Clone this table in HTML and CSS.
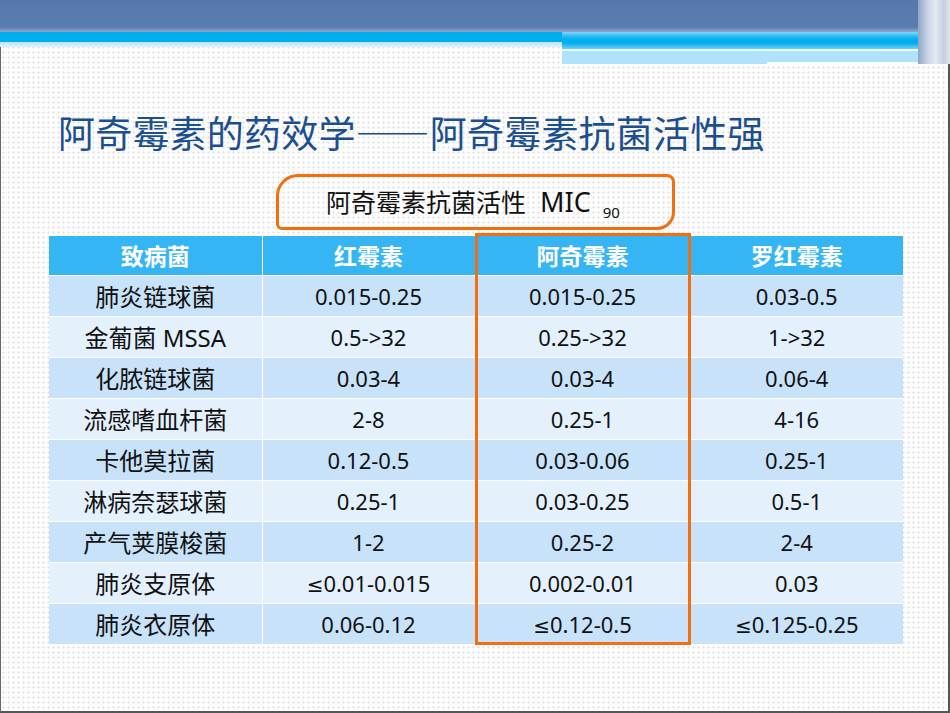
FILE: index.html
```html
<!DOCTYPE html>
<html lang="zh-CN">
<head>
<meta charset="utf-8">
<title>阿奇霉素的药效学</title>
<link rel="stylesheet" href="styles.css">
</head>
<body>
<div class="slide">
  <header class="topbar">
    <div class="bar-main">
      <div class="bar-dark"></div>
      <div class="bar-row">
        <div class="bar-left">
          <div class="bar-cyan"></div>
          <div class="bar-light"></div>
        </div>
        <div class="bar-right">
          <div class="br-cyan"></div>
          <div class="br-line"></div>
          <div class="br-pale"><div class="br-white"></div></div>
        </div>
      </div>
    </div>
    <div class="bar-edge"></div>
  </header>

  <h1 class="title">阿奇霉素的药效学——阿奇霉素抗菌活性强</h1>

  <div class="subtitle">阿奇霉素抗菌活性<span class="latin">MIC</span><sub>90</sub></div>

  <div class="table-wrap">
    <table class="mic">
      <thead>
        <tr><th>致病菌</th><th>红霉素</th><th>阿奇霉素</th><th>罗红霉素</th></tr>
      </thead>
      <tbody>
        <tr><td>肺炎链球菌</td><td>0.015-0.25</td><td>0.015-0.25</td><td>0.03-0.5</td></tr>
        <tr><td>金葡菌 MSSA</td><td>0.5-&gt;32</td><td>0.25-&gt;32</td><td>1-&gt;32</td></tr>
        <tr><td>化脓链球菌</td><td>0.03-4</td><td>0.03-4</td><td>0.06-4</td></tr>
        <tr><td>流感嗜血杆菌</td><td>2-8</td><td>0.25-1</td><td>4-16</td></tr>
        <tr><td>卡他莫拉菌</td><td>0.12-0.5</td><td>0.03-0.06</td><td>0.25-1</td></tr>
        <tr><td>淋病奈瑟球菌</td><td>0.25-1</td><td>0.03-0.25</td><td>0.5-1</td></tr>
        <tr><td>产气荚膜梭菌</td><td>1-2</td><td>0.25-2</td><td>2-4</td></tr>
        <tr><td>肺炎支原体</td><td><span class="le">≤</span>0.01-0.015</td><td>0.002-0.01</td><td>0.03</td></tr>
        <tr><td>肺炎衣原体</td><td>0.06-0.12</td><td><span class="le">≤</span>0.12-0.5</td><td><span class="le">≤</span>0.125-0.25</td></tr>
      </tbody>
    </table>
    <div class="highlight"></div>
  </div>
</div>
</body>
</html>
```

FILE: styles.css
```css
* { box-sizing: border-box; }
html, body { margin: 0; padding: 0; }
body {
  width: 950px;
  height: 713px;
  overflow: hidden;
  font-family: "Noto Sans CJK SC", "Noto Sans", sans-serif;
}
.slide {
  width: 950px;
  height: 713px;
  background-color: #fdfdfd;
  background-image: radial-gradient(circle, #e4e4e4 0.9px, transparent 1.4px);
  background-size: 5px 5px;
  border-left: 1px solid #666;
  border-right: 2px solid #555;
  border-bottom: 2px solid #555;
  display: flex;
  flex-direction: column;
}

/* header bands */
.topbar {
  display: flex;
  height: 64px;
  margin-left: -1px;
  margin-right: -2px;
}
.bar-main { flex: 1; display: flex; flex-direction: column; }
.bar-dark {
  height: 32px;
  background: linear-gradient(#5677ab, #5a7db1 85%, #8fa8cc);
}
.bar-row { display: flex; flex: 1; }
.bar-left { width: 562px; display: flex; flex-direction: column; }
.bar-cyan { height: 10px; background: #00aeef; }
.bar-light { height: 5px; background: linear-gradient(#b6e6fb, #dcf3fd); }
.bar-right { flex: 1; display: flex; flex-direction: column; }
.br-cyan {
  height: 17px;
  background: linear-gradient(#7fd5f7 0%, #2cbcf1 25%, #00aeef 45%, #00aeef 65%, #6fd0f6 100%);
}
.br-line {
  height: 2px;
  width: 318px;
  background: #eef9fe;
}
.br-pale {
  height: 13px;
  background: #b0e2f9;
  display: flex;
  flex-direction: column;
  justify-content: flex-end;
}
.br-white {
  height: 2px;
  margin-left: 205px;
  background: #f6fcff;
}
.bar-edge {
  width: 32px;
  background: linear-gradient(90deg, #8fa6c8 0%, #c9d4e4 30%, #e3e9f1 55%, #c3cfe0 80%, #dde4ee 100%);
}

/* title */
.title {
  margin: 46px 0 0 57px;
  font-size: 37px;
  line-height: 44px;
  font-weight: 400;
  color: #1b4f8f;
  letter-spacing: 0.2px;
}

/* subtitle box */
.subtitle {
  margin: 20px 0 0 275px;
  width: 399px;
  height: 56px;
  border: 3px solid #f36e0c;
  border-radius: 22px 8px 18px 6px;
  font-size: 25px;
  line-height: 48px;
  color: #111;
  padding-left: 47px;
}
.subtitle .latin {
  font-family: "Noto Sans", sans-serif;
  font-size: 27px;
  margin-left: 14px;
}
.subtitle sub {
  font-family: "Noto Sans", sans-serif;
  font-size: 15px;
  vertical-align: -6px;
  margin-left: 12px;
}

/* table */
.table-wrap {
  position: relative;
  margin: 6px 0 0 48px;
  width: 854px;
}
.mic {
  width: 854px;
  border-collapse: collapse;
  table-layout: fixed;
}
.mic th, .mic td {
  text-align: center;
  padding: 0;
  border-left: 1px solid #ffffff;
  border-top: 1px solid #ffffff;
}
.mic th:first-child, .mic td:first-child { border-left: none; }
.mic th:nth-child(1) { width: 213px; }
.mic th:nth-child(2) { width: 213px; }
.mic th:nth-child(3) { width: 215px; }
.mic th:nth-child(4) { width: 213px; }
.mic thead th {
  height: 39px;
  border-top: none;
  background: #35b5f4;
  color: #ffffff;
  font-weight: 700;
  font-size: 23px;
}
.mic td {
  height: 41px;
  font-family: "Noto Sans", "DejaVu Sans", "Noto Sans CJK SC", sans-serif;
  font-size: 22px;
  color: #111;
}
.mic td:first-child { font-size: 24px; }
.mic .le { font-family: "DejaVu Sans", sans-serif; font-size: 20px; }
.mic tbody tr:nth-child(odd) td { background: #c8e2f9; }
.mic tbody tr:nth-child(even) td { background: #e4f1fd; }

.highlight {
  position: absolute;
  left: 426px;
  top: -3px;
  width: 216px;
  height: 412px;
  border: 3px solid #f36e0c;
  pointer-events: none;
}
```
